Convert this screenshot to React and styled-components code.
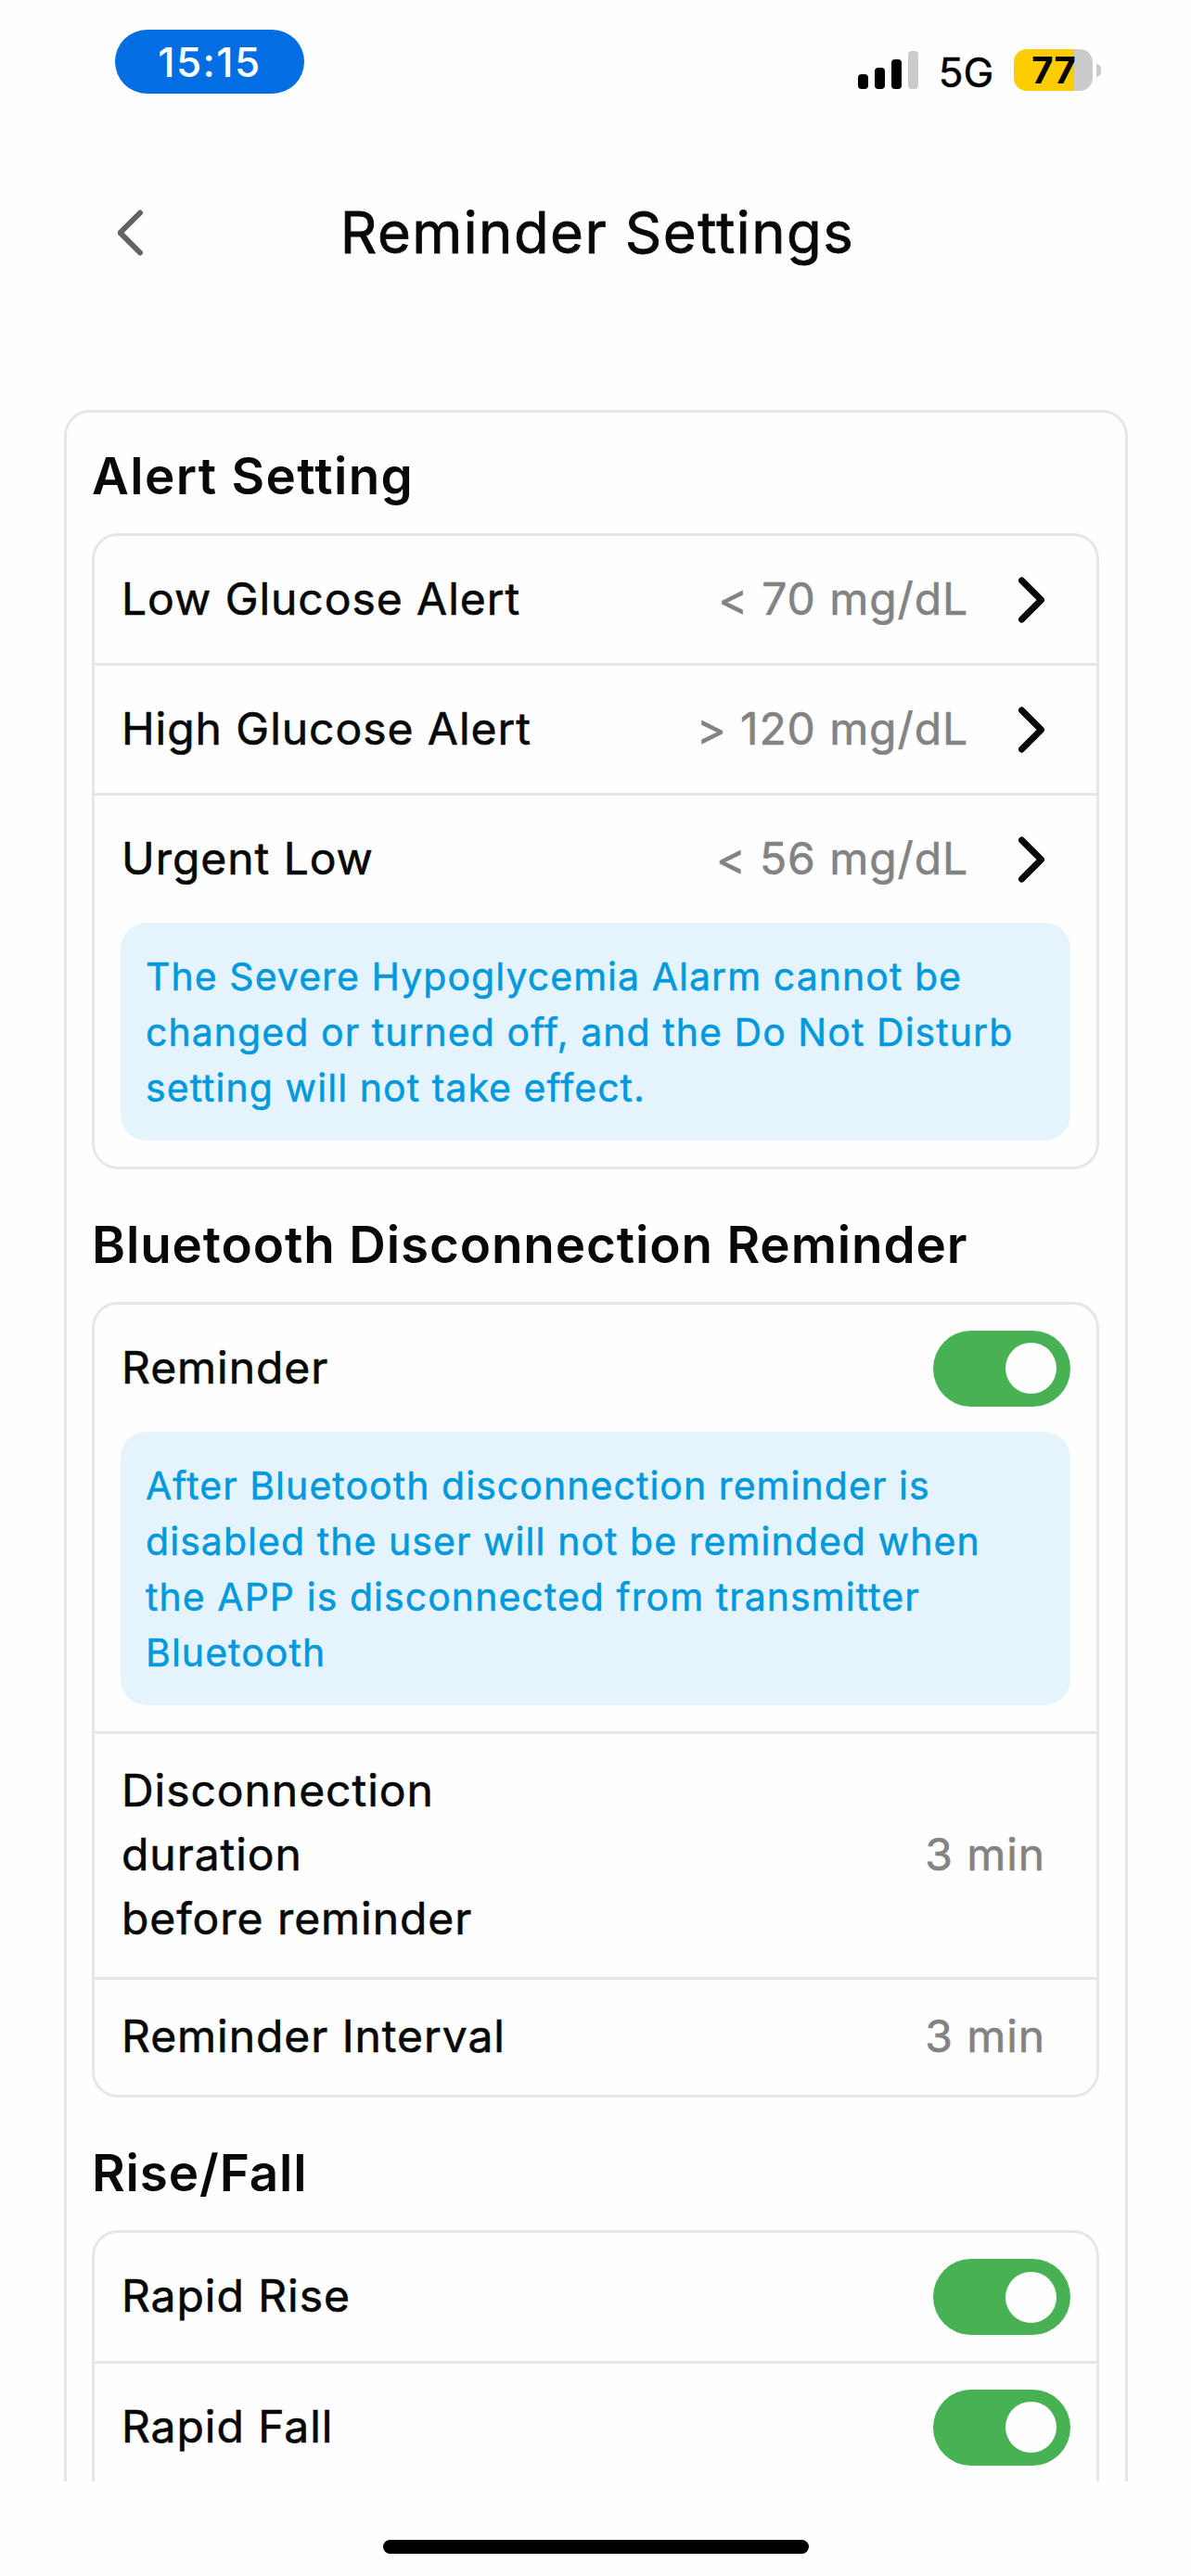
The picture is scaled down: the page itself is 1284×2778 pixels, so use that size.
import React, { useState } from "react";
import styled, { createGlobalStyle } from "styled-components";

const GlobalStyle = createGlobalStyle`
  * {
    box-sizing: border-box;
  }

  body {
    margin: 0;
    background: #fefefe;
    color: #070908;
    font-family: Inter, "Liberation Sans", sans-serif;
  }
`;

const Screen = styled.div`
  display: flex;
  flex-direction: column;
  width: 1284px;
  height: 2778px;
  overflow: hidden;
  background: #fefefe;
`;

const StatusBar = styled.div`
  display: flex;
  justify-content: space-between;
  height: 141px;
  padding: 32px 97px 0 124px;
`;

const TimePill = styled.div`
  width: 204px;
  height: 69px;
  border-radius: 35px;
  background: #036ee1;
  color: #fff;
  font-size: 44px;
  font-weight: 500;
  letter-spacing: 1.4px;
  line-height: 70px;
  text-align: center;
`;

const StatusIcons = styled.div`
  display: flex;
  align-items: flex-start;
`;

const Signal = styled.div`
  display: flex;
  align-items: flex-end;
  gap: 7px;
  height: 64px;
`;

const SignalBar = styled.span`
  width: 11px;
  height: ${({ $height }) => $height}px;
  border-radius: 4px;
  background: ${({ $off }) => ($off ? "#cbcbcb" : "#000")};
`;

const Network = styled.span`
  width: 103px;
  color: #000;
  font-size: 44px;
  font-weight: 400;
  line-height: 92px;
  text-align: center;
  -webkit-text-stroke: 0.5px;
`;

const Battery = styled.div`
  display: flex;
  align-items: center;
  gap: 4px;
  margin-top: 21px;
`;

const BatteryBody = styled.div`
  width: 85px;
  height: 45px;
  padding-left: 1px;
  border-radius: 14px;
  background: linear-gradient(to right, #fecc02 65px, #cbcbcb 65px);
  color: #000;
  font-size: 40px;
  font-weight: 700;
  line-height: 45px;
  text-align: center;
`;

const BatteryTip = styled.span`
  width: 5px;
  height: 14px;
  border-radius: 0 7px 7px 0;
  background: #cbcbcb;
`;

const Header = styled.header`
  display: grid;
  grid-template-columns: 128px 1fr 124px;
  align-items: center;
  height: 219px;
  margin-bottom: 82px;
`;

const BackButton = styled.button`
  justify-self: end;
  width: 30px;
  height: 50px;
  margin-right: -29px;
  padding: 0;
  border: 0;
  background: none;
  color: #616462;
`;

const Title = styled.h1`
  margin: 0;
  font-size: 61.6px;
  font-weight: 400;
  letter-spacing: 1.45px;
  line-height: 80px;
  text-align: center;
  -webkit-text-stroke: 0.8px;
`;

const Scroller = styled.main`
  height: 2234px;
  overflow: hidden;
`;

const Panel = styled.div`
  height: 2600px;
  margin: 0 68px 0 69px;
  padding: 0 28px 0 27px;
  border: 3px solid #e6e6e6;
  border-radius: 28px;
`;

const Heading = styled.h2`
  margin: 0 0 28px;
  padding-top: ${({ $first }) => ($first ? 34 : 47)}px;
  font-size: 54.8px;
  font-weight: 600;
  letter-spacing: ${({ $first }) => ($first ? 1.35 : 0.86)}px;
  line-height: 68px;
`;

const Card = styled.section`
  min-height: ${({ $minHeight }) => $minHeight || 0}px;
  border: 3px solid #e6e6e6;
  border-radius: 28px;
`;

const Item = styled.div`
  & + & {
    border-top: 3px solid #e6e6e6;
  }
`;

const Row = styled.div`
  display: flex;
  align-items: center;
  height: ${({ $height }) => $height || 137}px;
  padding: 0 28px;
`;

const Label = styled.div`
  flex: 1;
  padding: 0 0 3px 1px;
  font-size: 48px;
  font-weight: 400;
  letter-spacing: 0.95px;
  line-height: 69px;
  -webkit-text-stroke: 0.6px;
`;

const Value = styled.div`
  margin-right: ${({ $plain }) => ($plain ? 27 : 53)}px;
  padding-bottom: 3px;
  color: #838383;
  font-size: 48px;
  font-weight: 400;
  letter-spacing: 0.9px;
  line-height: 69px;
  -webkit-text-stroke: 0.6px;
`;

const MoreIcon = styled.div`
  width: 30px;
  height: 50px;
  margin-right: 27px;
`;

const Info = styled.p`
  margin: 0 28px 28px;
  padding: 28px 28px 27px 27px;
  border-radius: 28px;
  background: #e5f4fc;
  color: #0099de;
  font-size: 41px;
  font-weight: 400;
  letter-spacing: 1.05px;
  line-height: 60px;
  -webkit-text-stroke: 0.5px;
`;

const Track = styled.button`
  display: flex;
  align-items: center;
  justify-content: ${({ $on }) => ($on ? "flex-end" : "flex-start")};
  width: 148px;
  height: 82px;
  padding: 0 15px;
  border: 0;
  border-radius: 41px;
  background: ${({ $on }) => ($on ? "#47b153" : "#cbcbcb")};
`;

const Knob = styled.span`
  width: 55px;
  height: 55px;
  border-radius: 50%;
  background: #fefefe;
`;

const HomeBar = styled.div`
  width: 459px;
  height: 15px;
  margin: 63px 0 0 413px;
  border-radius: 8px;
  background: #000;
`;

const Chevron = ({ left, width }) => (
  <svg width="30" height="50" viewBox="0 0 30 50" fill="none" display="block">
    <path
      d={left ? "M24 3.5L2.5 25L24 46.5" : "M4.5 4L25.5 25L4.5 46"}
      stroke="currentColor"
      strokeWidth={width}
      strokeLinecap="round"
      strokeLinejoin="round"
    />
  </svg>
);

const Toggle = () => {
  const [on, setOn] = useState(true);

  return (
    <Track role="switch" aria-checked={on} $on={on} onClick={() => setOn(!on)}>
      <Knob />
    </Track>
  );
};

const LinkRow = ({ label, value }) => (
  <Row>
    <Label>{label}</Label>
    <Value>{value}</Value>
    <MoreIcon>
      <Chevron width={7} />
    </MoreIcon>
  </Row>
);

const ToggleRow = ({ label, height }) => (
  <Row $height={height}>
    <Label>{label}</Label>
    <Toggle />
  </Row>
);

const App = () => (
  <Screen>
    <GlobalStyle />
    <StatusBar>
      <TimePill>15:15</TimePill>
      <StatusIcons>
        <Signal>
          <SignalBar $height={16} />
          <SignalBar $height={23} />
          <SignalBar $height={32} />
          <SignalBar $height={41} $off />
        </Signal>
        <Network>5G</Network>
        <Battery>
          <BatteryBody>77</BatteryBody>
          <BatteryTip />
        </Battery>
      </StatusIcons>
    </StatusBar>
    <Header>
      <BackButton aria-label="Back">
        <Chevron left width={6} />
      </BackButton>
      <Title>Reminder Settings</Title>
    </Header>
    <Scroller>
      <Panel>
        <Heading $first>Alert Setting</Heading>
        <Card>
          <Item>
            <LinkRow label="Low Glucose Alert" value="< 70 mg/dL" />
          </Item>
          <Item>
            <LinkRow label="High Glucose Alert" value="> 120 mg/dL" />
          </Item>
          <Item>
            <LinkRow label="Urgent Low" value="< 56 mg/dL" />
            <Info>
              The Severe Hypoglycemia Alarm cannot be changed or turned off, and
              the Do Not Disturb setting will not take effect.
            </Info>
          </Item>
        </Card>

        <Heading>Bluetooth Disconnection Reminder</Heading>
        <Card>
          <Item>
            <ToggleRow label="Reminder" />
            <Info>
              After Bluetooth disconnection reminder is disabled the user will
              not be reminded when the APP is disconnected from transmitter
              Bluetooth
            </Info>
          </Item>
          <Item>
            <Row $height={262}>
              <Label>
                Disconnection
                <br />
                duration
                <br />
                before reminder
              </Label>
              <Value $plain>3 min</Value>
            </Row>
          </Item>
          <Item>
            <Row $height={124}>
              <Label>Reminder Interval</Label>
              <Value $plain>3 min</Value>
            </Row>
          </Item>
        </Card>

        <Heading>Rise/Fall</Heading>
        <Card $minHeight={420}>
          <Item>
            <ToggleRow label="Rapid Rise" height={138} />
          </Item>
          <Item>
            <ToggleRow label="Rapid Fall" />
          </Item>
        </Card>
      </Panel>
    </Scroller>
    <HomeBar />
  </Screen>
);

export default App;
